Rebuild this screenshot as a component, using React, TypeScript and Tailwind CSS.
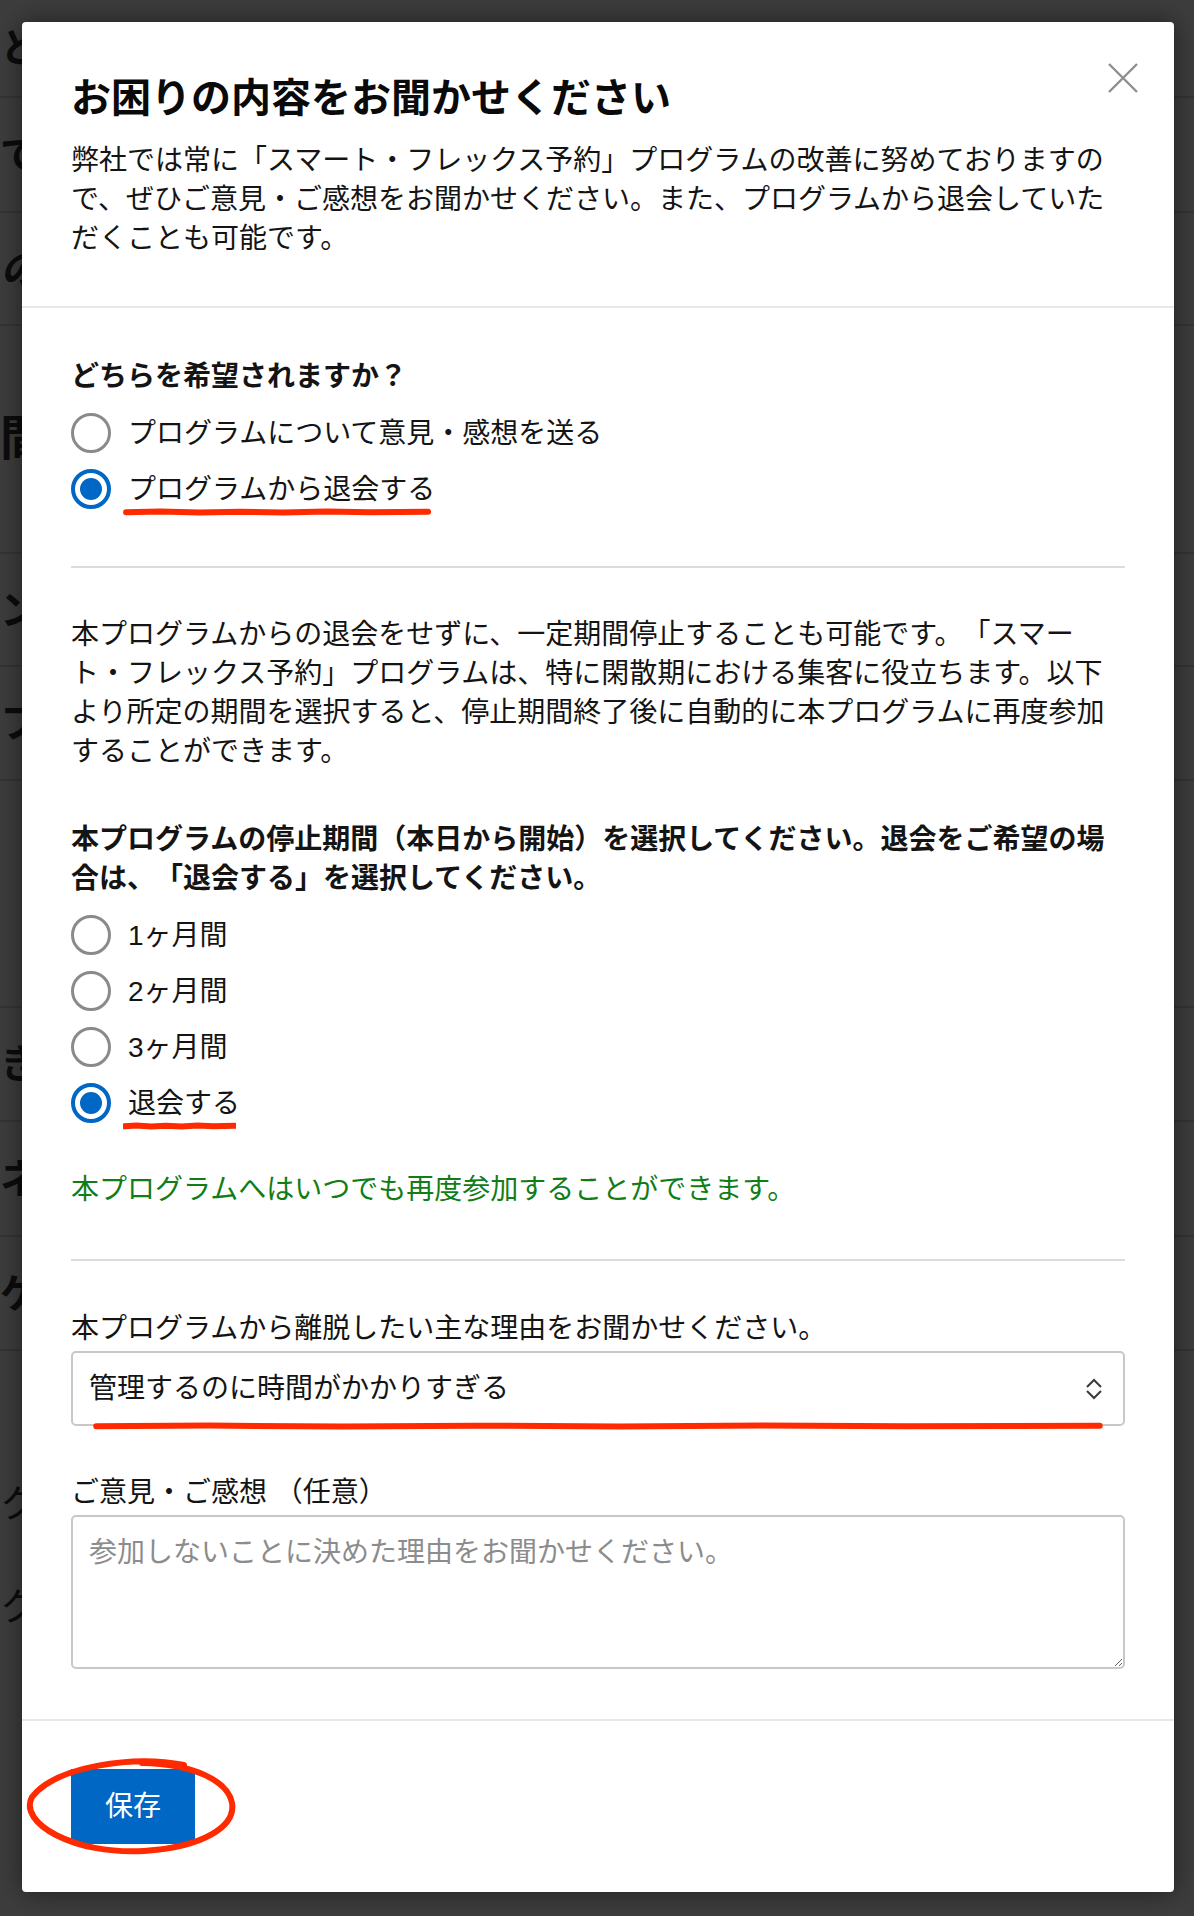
import React from "react";

const FONT = "font-['Liberation_Sans','Noto_Sans_CJK_JP',sans-serif]";

function Radio({ checked }: { checked?: boolean }) {
  if (checked) {
    return (
      <span className="flex h-[40px] w-[40px] shrink-0 items-center justify-center rounded-full border-4 border-[#0067c5]">
        <span className="h-[22px] w-[22px] rounded-full bg-[#0067c5]" />
      </span>
    );
  }
  return <span className="h-[40px] w-[40px] shrink-0 rounded-full border-[3px] border-[#8a8a8a]" />;
}

// red marker stroke drawn on the screenshot
function Scribble({ className }: { className: string }) {
  return (
    <svg className={className} viewBox="0 0 100 8" preserveAspectRatio="none" aria-hidden>
      <path
        d="M1 4.3 L12 3.6 L25 4.5 L38 3.7 L52 4.4 L66 3.5 L80 4.2 L99 3.8"
        fill="none"
        stroke="#ff2a00"
        strokeWidth="6"
        strokeLinecap="round"
        vectorEffect="non-scaling-stroke"
      />
    </svg>
  );
}

function Option({ label, checked, mark }: { label: string; checked?: boolean; mark?: boolean }) {
  return (
    <div className="flex h-[56px] items-center gap-[17px]">
      <Radio checked={checked} />
      <span className="relative">
        {label}
        {mark ? <Scribble className="pointer-events-none absolute -bottom-[7px] left-[-5px] h-[8px] w-[calc(100%+1px)]" /> : null}
      </span>
    </div>
  );
}

const bgRows = [
  { cls: "h-[98px]", text: "と", t: "text-[40px] font-bold" },
  { cls: "h-[115px]", text: "で", t: "text-[40px] font-bold" },
  { cls: "h-[113px]", text: "の", t: "text-[40px] font-bold italic" },
  { cls: "h-[228px]", text: "間", t: "text-[48px] font-bold" },
  { cls: "h-[113px]", text: "ン", t: "text-[40px] font-bold" },
  { cls: "h-[114px]", text: "フ", t: "text-[40px] font-bold" },
  { cls: "h-[227px]", text: "", t: "" },
  { cls: "h-[114px]", text: "き", t: "text-[40px] font-bold" },
  { cls: "h-[115px]", text: "ネ", t: "text-[40px] font-bold" },
  { cls: "h-[114px]", text: "ゲ", t: "text-[40px] font-bold" },
];

export default function App() {
  return (
    <div className={`relative h-[1916px] w-[1194px] overflow-hidden bg-[#3d3d3d] [text-spacing-trim:space-all] ${FONT}`}>
      {/* page behind the dialog */}
      <div className="flex flex-col text-[#0c0c0c]">
        {bgRows.map((r, i) => (
          <div key={i} className={`flex items-center border-b-2 border-[#343434] ${r.cls}`}>
            <span className={r.t}>{r.text}</span>
          </div>
        ))}
        <div className="flex flex-col gap-[46px] pt-[125px] text-[38px]">
          <span>ク</span>
          <span>ク</span>
        </div>
      </div>

      <div className="absolute inset-0 pl-[22px] pt-[22px]">
        <div className="relative w-[1152px] rounded-[4px] bg-white text-[28px] leading-[39px] text-[#141414] shadow-[0_0_26px_rgba(0,0,0,0.5)]">
          <button className="absolute right-[36px] top-[41px] h-[30px] w-[30px]" aria-label="close">
            <svg viewBox="0 0 30 30" className="h-[30px] w-[30px]">
              <path d="M1 1 L29 29 M29 1 L1 29" stroke="#8e8e8e" strokeWidth="2.4" fill="none" />
            </svg>
          </button>

          <div className="border-b-2 border-[#e8e8e8] px-[49px] pb-[48px] pt-[48px]">
            <h1 className="text-[40px] font-bold leading-[56px] text-[#0a0a0a]">お困りの内容をお聞かせください</h1>
            <p className="mt-[15px]">
              弊社では常に「スマート・フレックス予約」プログラムの改善に努めておりますので、ぜひご意見・ご感想をお聞かせください。また、プログラムから退会していただくことも可能です。
            </p>
          </div>

          <div className="px-[49px]">
            <div className="border-b-2 border-[#dcdcdc] pb-[49px] pt-[49px]">
              <p className="font-bold">どちらを希望されますか？</p>
              <div className="mt-[9px]">
                <Option label="プログラムについて意見・感想を送る" />
                <Option label="プログラムから退会する" checked mark />
              </div>
            </div>

            <div className="border-b-2 border-[#dcdcdc] pb-[50px] pt-[47px]">
              <p>
                本プログラムからの退会をせずに、一定期間停止することも可能です。「スマート・フレックス予約」プログラムは、特に閑散期における集客に役立ちます。以下より所定の期間を選択すると、停止期間終了後に自動的に本プログラムに再度参加することができます。
              </p>
              <p className="mt-[49px] font-bold">
                本プログラムの停止期間（本日から開始）を選択してください。退会をご希望の場合は、「退会する」を選択してください。
              </p>
              <div className="mt-[9px]">
                <Option label="1ヶ月間" />
                <Option label="2ヶ月間" />
                <Option label="3ヶ月間" />
                <Option label="退会する" checked mark />
              </div>
              <p className="mt-[39px] text-[#127c17]">本プログラムへはいつでも再度参加することができます。</p>
            </div>

            <div className="pb-[50px] pt-[48px]">
              <label className="block">本プログラムから離脱したい主な理由をお聞かせください。</label>
              <div className="relative mt-[3px]">
                <select
                  defaultValue="time"
                  className={`h-[75px] w-full appearance-none rounded-[5px] border-2 border-[#c8c8c8] bg-white pl-[16px] pr-[56px] text-[28px] leading-[39px] text-[#141414] outline-none ${FONT}`}
                >
                  <option value="time">管理するのに時間がかかりすぎる</option>
                </select>
                <svg
                  viewBox="0 0 18 24"
                  className="pointer-events-none absolute right-[22px] top-1/2 h-[24px] w-[18px] -translate-y-1/2"
                  aria-hidden
                >
                  <path d="M2 10 L9 3 L16 10 M2 14 L9 21 L16 14" stroke="#3a3a3a" strokeWidth="2" fill="none" />
                </svg>
                <Scribble className="pointer-events-none absolute -bottom-[4px] left-[15px] h-[8px] w-[1024px]" />
              </div>

              <label className="mt-[47px] block">ご意見・ご感想 （任意）</label>
              <textarea
                placeholder="参加しないことに決めた理由をお聞かせください。"
                className={`mt-[3px] block h-[154px] w-full rounded-[5px] border-2 border-[#c8c8c8] bg-white px-[16px] pt-[16px] text-[28px] leading-[39px] text-[#141414] outline-none placeholder:text-[#8c8c8c] ${FONT}`}
              />
            </div>
          </div>

          <div className="border-t-2 border-[#e8e8e8] px-[49px] py-[48px]">
            <div className="relative inline-block">
              <button className="h-[75px] w-[124px] bg-[#0067c5] text-[28px] leading-[39px] text-white">保存</button>
              <svg
                viewBox="0 0 216 103"
                className="pointer-events-none absolute left-[-47px] top-[-13px] h-[103px] w-[216px]"
                aria-hidden
              >
                <path
                  d="M160 9 C110 -1 32 10 8 41 C-6 67 50 99 120 95 C180 91 212 70 208 47 C204 25 170 8 118 7"
                  fill="none"
                  stroke="#ff2a00"
                  strokeWidth="6"
                  strokeLinecap="round"
                />
              </svg>
            </div>
          </div>
        </div>
      </div>
    </div>
  );
}
